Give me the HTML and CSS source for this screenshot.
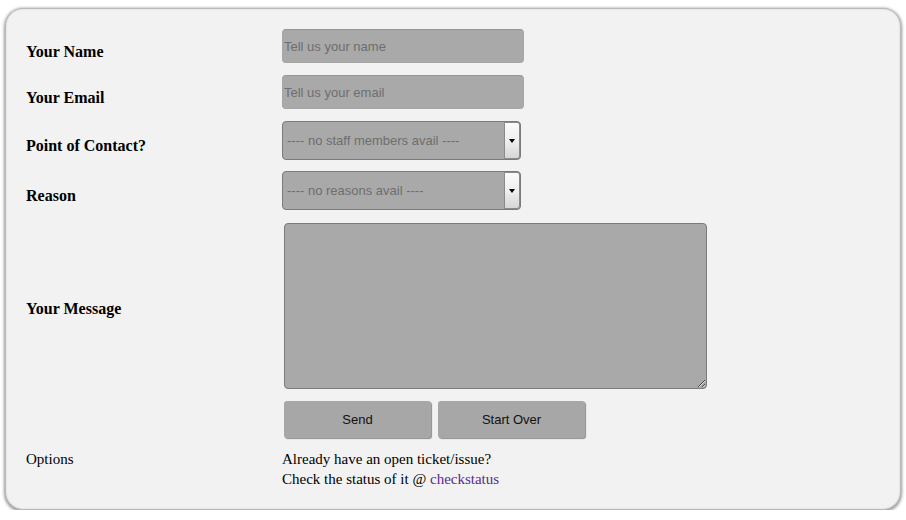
FILE: index.html
```html
<!DOCTYPE html>
<html>
<head>
<meta charset="utf-8">
<link rel="stylesheet" href="styles.css">
</head>
<body>
<form class="panel">
  <label class="lbl" for="n">Your Name</label>
  <div class="cell"><input class="txt" id="n" type="text" placeholder="Tell us your name"></div>

  <label class="lbl" for="e">Your Email</label>
  <div class="cell"><input class="txt" id="e" type="text" placeholder="Tell us your email"></div>

  <label class="lbl" for="s">Point of Contact?</label>
  <div class="cell cell-sel">
    <div class="sel-wrap">
      <select class="sel" id="s"><option>---- no staff members avail ----</option></select>
      <span class="sel-btn"><span class="tri"></span></span>
    </div>
  </div>

  <label class="lbl" for="r">Reason</label>
  <div class="cell cell-sel">
    <div class="sel-wrap">
      <select class="sel" id="r"><option>---- no reasons avail ----</option></select>
      <span class="sel-btn"><span class="tri"></span></span>
    </div>
  </div>

  <label class="lbl" for="m">Your Message</label>
  <div class="cell cell-msg"><textarea class="msg" id="m"></textarea></div>

  <div class="lbl"></div>
  <div class="cell btns">
    <button type="button" class="btn">Send</button>
    <button type="button" class="btn">Start Over</button>
  </div>

  <div class="lbl lbl-top plain">Options</div>
  <div class="cell opts">
    Already have an open ticket/issue?<br>
    Check the status of it @ <a class="lnk" href="#">checkstatus</a>
  </div>
</form>
</body>
</html>
```
FILE: styles.css
```css
html, body {
  margin: 0;
  padding: 0;
  background: #ffffff;
}
body {
  font-family: "Liberation Serif", "Times New Roman", serif;
  font-size: 16px;
  color: #000;
}
.panel {
  box-sizing: border-box;
  width: 896px;
  margin: 8px 0 0 5px;
  padding: 20px 20px 20px 20px;
  background: #f2f2f2;
  border: 1px solid #b9b9b9;
  border-radius: 18px;
  box-shadow: 0 1px 3px 1px #9a9a9a, inset 0 0 2px #d0d0d0;
  display: grid;
  grid-template-columns: 256px 1fr;
  align-items: center;
}
.lbl {
  font-weight: bold;
  align-self: center;
}
.lbl.plain {
  font-weight: normal;
  font-size: 15px;
}
.lbl-top {
  align-self: start;
  line-height: 20px;
}
.cell {
  display: flex;
  align-items: flex-start;
}
.txt {
  box-sizing: border-box;
  width: 242px;
  height: 34px;
  margin: 0 0 12px 0;
  padding: 0 0 0 1px;
  background: #a9a9a9;
  border: 1px solid #a6a6a6;
  border-top-color: #969696;
  border-radius: 4px;
  font-family: "Liberation Sans", Arial, sans-serif;
  font-size: 13px;
  color: #333;
  outline: none;
}
.txt::placeholder {
  color: #6e6e6e;
}
.sel-wrap {
  position: relative;
  width: 239px;
  height: 39px;
  margin-bottom: 11px;
}
.sel {
  -webkit-appearance: none;
  appearance: none;
  box-sizing: border-box;
  width: 239px;
  height: 39px;
  padding: 0 0 0 4px;
  background: #a9a9a9;
  border: 1px solid #7b7b7b;
  border-radius: 4px;
  font-family: "Liberation Sans", Arial, sans-serif;
  font-size: 13px;
  color: #6e6e6e;
  outline: none;
}
.sel-btn {
  position: absolute;
  top: 1px;
  right: 1px;
  box-sizing: border-box;
  width: 16px;
  height: 37px;
  border: 1px solid #8a8a8a;
  border-radius: 0 3px 3px 0;
  background: linear-gradient(to bottom, #fbfbfb 0%, #efefef 50%, #d6d6d6 100%);
  display: flex;
  align-items: center;
  justify-content: center;
}
.tri {
  width: 0;
  height: 0;
  border-left: 3px solid transparent;
  border-right: 3px solid transparent;
  border-top: 4px solid #000;
}
.cell-msg {
  padding: 2px 0 8px 2px;
}
.msg {
  box-sizing: border-box;
  width: 423px;
  height: 166px;
  margin: 0;
  background: #a9a9a9;
  border: 1px solid #7b7b7b;
  border-radius: 4px;
  outline: none;
  resize: both;
}
.btns {
  gap: 7px;
  padding: 4px 0 11px 2px;
}
.btn {
  box-sizing: border-box;
  width: 147px;
  height: 37px;
  margin: 0;
  background: #a7a7a7;
  border: none;
  border-radius: 3px;
  box-shadow: 1px 1px 1px #8e8e8e;
  font-family: "Liberation Sans", Arial, sans-serif;
  font-size: 13px;
  color: #111;
  padding: 0;
}
.opts {
  display: block;
  font-size: 15px;
  line-height: 20px;
}
.lnk {
  color: #5b2a8e;
  text-decoration: none;
}
```
